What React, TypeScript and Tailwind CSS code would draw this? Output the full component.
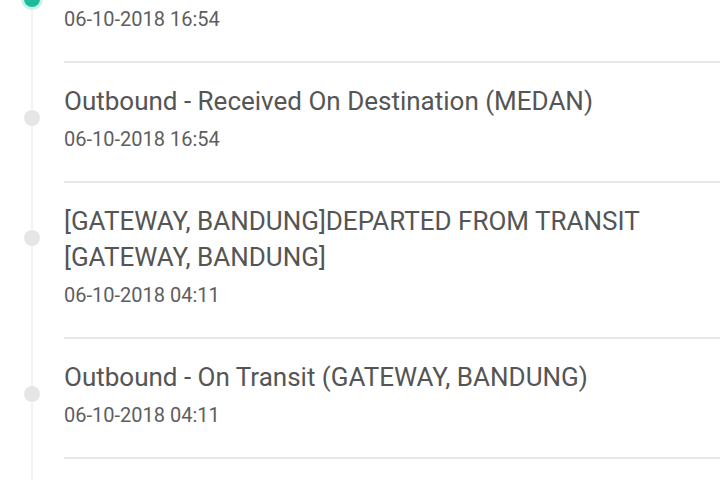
import React from 'react';

type Track = {
  title: string;
  date: string;
  active?: boolean;
};

const tracks: Track[] = [
  { title: 'Outbound - Delivered (MEDAN)', date: '06-10-2018 16:54', active: true },
  { title: 'Outbound - Received On Destination (MEDAN)', date: '06-10-2018 16:54' },
  {
    title: '[GATEWAY, BANDUNG]DEPARTED FROM TRANSIT [GATEWAY, BANDUNG]',
    date: '06-10-2018 04:11',
  },
  { title: 'Outbound - On Transit (GATEWAY, BANDUNG)', date: '06-10-2018 04:11' },
  { title: 'Outbound - Processed At Origin (BANDUNG)', date: '06-10-2018 03:20' },
];

const TrackRow: React.FC<{ track: Track }> = ({ track }) => {
  return (
    <div className="flex">
      {/* timeline rail */}
      <div className="w-16 shrink-0 flex flex-col items-center">
        {track.active ? (
          <>
            <div className="w-[2px] h-[45px] bg-[#f3f3f3]" />
            <div className="w-[22px] h-[22px] rounded-full bg-[#1bbc9b] border-[3px] border-[#cdf1e8]" />
          </>
        ) : (
          <>
            <div className="w-[2px] h-[47px] bg-[#f3f3f3]" />
            <div className="w-4 h-4 rounded-full bg-[#e6e6e6]" />
          </>
        )}
        <div className="w-[2px] flex-1 bg-[#f3f3f3]" />
      </div>
      <div className="flex-1 pt-5 pb-7 border-b-2 border-[#e8e8e8]">
        <div className="text-[26px] leading-[36px] text-[#555555] pr-6">{track.title}</div>
        <div className="mt-[6px] text-[20px] leading-[28px] text-[#5e5e5e]">{track.date}</div>
      </div>
    </div>
  );
};

export default function App() {
  return (
    <div
      className="w-[720px] h-[480px] overflow-hidden bg-white"
      style={{ fontFamily: 'Roboto, "Liberation Sans", sans-serif' }}
    >
      <div className="-mt-[57px]">
        {tracks.map((t, i) => (
          <TrackRow key={i} track={t} />
        ))}
      </div>
    </div>
  );
}
